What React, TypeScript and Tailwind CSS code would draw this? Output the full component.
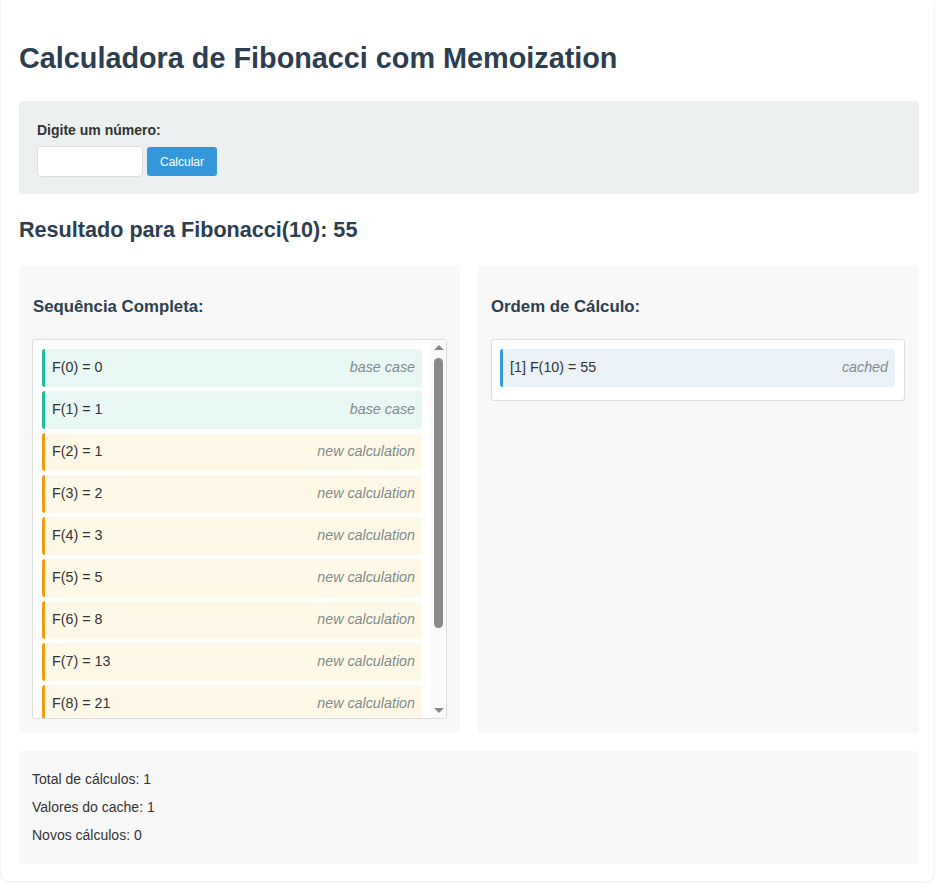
import React from 'react';

type Entry = { n: number; value: number; kind: 'base' | 'new' | 'cached' };

const fib = (n: number): number => {
  let a = 0;
  let b = 1;
  for (let i = 0; i < n; i++) [a, b] = [b, a + b];
  return a;
};

// only the rows visible in the scroll box (F(0)..F(8))
const sequence: Entry[] = Array.from({ length: 9 }, (_, n) => ({
  n,
  value: fib(n),
  kind: n < 2 ? 'base' : 'new',
}));

const kindStyle = {
  base: 'border-[#1abc9c] bg-[#e8f8f5]',
  new: 'border-[#f39c12] bg-[#fef9e7]',
  cached: 'border-[#3498db] bg-[#eaf2f8]',
};

const kindLabel = {
  base: 'base case',
  new: 'new calculation',
  cached: 'cached',
};

const Row: React.FC<{ entry: Entry; prefix?: string }> = ({ entry, prefix }) => (
  <div className={`mb-1 flex h-[38px] shrink-0 items-center justify-between rounded-[3px] border-l-[3px] pb-[1px] pl-[7px] pr-[7px] ${kindStyle[entry.kind]}`}>
    <span className="text-[14.3px] text-[#333]">
      {prefix}F({entry.n}) = {entry.value}
    </span>
    <span className="text-[14.3px] italic text-[#7f8c8d]">{kindLabel[entry.kind]}</span>
  </div>
);

// the list box's scrollbar, drawn since the headless page hides native ones
const FakeScrollbar = () => (
  <div className="flex w-[15px] shrink-0 flex-col items-center bg-[#fafafa]">
    <div className="flex h-[15px] w-full items-center justify-center">
      <div className="h-0 w-0 border-x-[5px] border-b-[5px] border-x-transparent border-b-[#8a8a8a]" />
    </div>
    <div className="mt-[3px] h-[270px] w-[9px] rounded-full bg-[#8a8a8a]" />
    <div className="flex-1" />
    <div className="flex h-[15px] w-full items-center justify-center">
      <div className="h-0 w-0 border-x-[5px] border-t-[5px] border-x-transparent border-t-[#8a8a8a]" />
    </div>
  </div>
);

export default function App() {
  return (
    <div className="min-h-[883px] bg-white font-['Liberation_Sans',Arial,sans-serif]">
      <div className="ml-[1px] w-[933px] rounded-b-lg bg-white pb-[17px] pl-[18px] pr-[15px] pt-[42px] shadow-[0_0_4px_rgba(0,0,0,0.12)]">
        <h1 className="text-[28.8px] font-bold leading-[33px] text-[#2c3e50]">
          Calculadora de Fibonacci com Memoization
        </h1>

        <div className="mt-[26px] rounded-[4px] bg-[#ecf0f1] px-[18px] pb-[17px] pt-[21px]">
          <label className="block text-[14px] font-bold leading-[16px] text-[#333]">Digite um número:</label>
          <div className="mt-[8px] flex items-center gap-[4px]">
            <input type="number" className="h-[31px] w-[106px] rounded-[4px] border border-[#ddd] bg-white px-2 text-[14px] outline-none" />
            <button type="button" className="h-[29px] rounded-[3px] bg-[#3498db] px-[13px] text-[12px] text-white">
              Calcular
            </button>
          </div>
        </div>

        <h3 className="mt-[23px] text-[21.6px] font-bold leading-[25px] text-[#2c3e50]">
          Resultado para Fibonacci(10): 55
        </h3>

        <div className="mt-[23px] grid grid-cols-2 gap-[18px]">
          <div className="rounded-[4px] bg-[#f8f8f8] px-[13px] pb-[14px] pt-[15px]">
            <h4 className="ml-[1px] mt-[18px] text-[16.8px] font-bold leading-[18px] text-[#2c3e50]">Sequência Completa:</h4>
            <div className="mt-[23px] flex h-[380px] rounded-[3px] border border-[#ddd] bg-white">
              <div className="flex min-w-0 flex-1 flex-col overflow-hidden p-[9px]">
                {sequence.map((e) => (
                  <Row key={e.n} entry={e} />
                ))}
              </div>
              <FakeScrollbar />
            </div>
          </div>

          <div className="rounded-[4px] bg-[#f8f8f8] pb-[14px] pl-[13px] pr-[14px] pt-[15px]">
            <h4 className="mt-[18px] text-[16.8px] font-bold leading-[18px] text-[#2c3e50]">Ordem de Cálculo:</h4>
            <div className="mt-[23px] rounded-[3px] border border-[#ddd] bg-white pb-[9px] pl-[8px] pr-[9px] pt-[9px]">
              <Row entry={{ n: 10, value: 55, kind: 'cached' }} prefix="[1] " />
            </div>
          </div>
        </div>

        <div className="mt-[18px] rounded-[4px] bg-[#f8f8f8] px-[13px] pb-[15px] pt-[14px] text-[14px] leading-[28px] text-[#333]">
          <p>Total de cálculos: 1</p>
          <p>Valores do cache: 1</p>
          <p>Novos cálculos: 0</p>
        </div>
      </div>
    </div>
  );
}
